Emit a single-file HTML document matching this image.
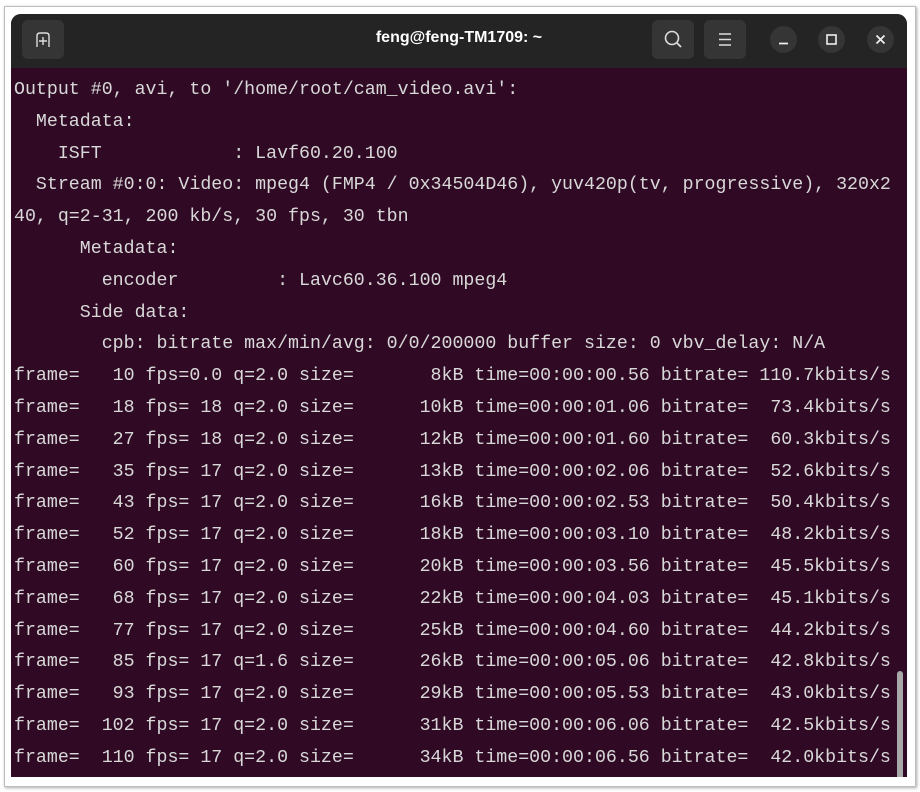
<!DOCTYPE html>
<html><head><style>
body{margin:0;width:920px;height:792px;background:#fff;position:relative;overflow:hidden}
.outer{position:absolute;left:4px;top:6px;width:910px;height:779px;border:1px solid #bdbdbd;box-shadow:1px 1px 3px #aaa;background:#fff}
.win{position:absolute;left:11px;top:14px;width:896px;height:763px;background:#300a24;border-radius:10px 10px 0 0;overflow:hidden}
.hdr{position:absolute;left:0;top:0;width:896px;height:54px;background:#242424}
.btn{position:absolute;top:6px;width:42px;height:39px;background:#353535;border-radius:6px}
.cir{position:absolute;top:12px;width:27px;height:27px;border-radius:50%;background:#353535}
.title{position:absolute;left:0;width:896px;top:15px;text-align:center;color:#fff;font:bold 16px "Liberation Sans",sans-serif}
pre{position:absolute;left:3px;top:61px;margin:0;color:#d8d8d8;font:18.27px/31.8px "Liberation Mono",monospace;white-space:pre}
.sb{position:absolute;left:886px;top:657px;width:6px;height:110px;background:#a8a8a8;border-radius:3px}
</style></head><body>
<div class="outer"></div>
<div class="win">
<div class="hdr">
<div class="btn" style="left:11px"><svg width="42" height="39"><path d="M15 27V16q0-3 3-3h6q3 0 3 3v11" fill="none" stroke="#ddd" stroke-width="1.4"/><path d="M21 17v8M17 21h8" stroke="#ddd" stroke-width="1.4"/></svg></div>
<div class="title">feng@feng-TM1709: ~</div>
<div class="btn" style="left:641px"><svg width="42" height="39"><circle cx="20" cy="18" r="6.5" fill="none" stroke="#ddd" stroke-width="1.6"/><path d="M25 23l4 4" stroke="#ddd" stroke-width="1.8"/></svg></div>
<div class="btn" style="left:693px"><svg width="42" height="39"><path d="M15 14h12M15 19.5h12M15 25h12" stroke="#ddd" stroke-width="1.6"/></svg></div>
<div class="cir" style="left:759px"><svg width="27" height="27"><path d="M9 17.5h9" stroke="#eee" stroke-width="1.8"/></svg></div>
<div class="cir" style="left:807px"><svg width="27" height="27"><rect x="9" y="9" width="9" height="9" fill="none" stroke="#eee" stroke-width="1.6"/></svg></div>
<div class="cir" style="left:856px"><svg width="27" height="27"><path d="M9.5 9.5l8 8M17.5 9.5l-8 8" stroke="#eee" stroke-width="1.8"/></svg></div>
</div>
<pre>Output #0, avi, to '/home/root/cam_video.avi':
  Metadata:
    ISFT            : Lavf60.20.100
  Stream #0:0: Video: mpeg4 (FMP4 / 0x34504D46), yuv420p(tv, progressive), 320x2
40, q=2-31, 200 kb/s, 30 fps, 30 tbn
      Metadata:
        encoder         : Lavc60.36.100 mpeg4
      Side data:
        cpb: bitrate max/min/avg: 0/0/200000 buffer size: 0 vbv_delay: N/A
frame=   10 fps=0.0 q=2.0 size=       8kB time=00:00:00.56 bitrate= 110.7kbits/s
frame=   18 fps= 18 q=2.0 size=      10kB time=00:00:01.06 bitrate=  73.4kbits/s
frame=   27 fps= 18 q=2.0 size=      12kB time=00:00:01.60 bitrate=  60.3kbits/s
frame=   35 fps= 17 q=2.0 size=      13kB time=00:00:02.06 bitrate=  52.6kbits/s
frame=   43 fps= 17 q=2.0 size=      16kB time=00:00:02.53 bitrate=  50.4kbits/s
frame=   52 fps= 17 q=2.0 size=      18kB time=00:00:03.10 bitrate=  48.2kbits/s
frame=   60 fps= 17 q=2.0 size=      20kB time=00:00:03.56 bitrate=  45.5kbits/s
frame=   68 fps= 17 q=2.0 size=      22kB time=00:00:04.03 bitrate=  45.1kbits/s
frame=   77 fps= 17 q=2.0 size=      25kB time=00:00:04.60 bitrate=  44.2kbits/s
frame=   85 fps= 17 q=1.6 size=      26kB time=00:00:05.06 bitrate=  42.8kbits/s
frame=   93 fps= 17 q=2.0 size=      29kB time=00:00:05.53 bitrate=  43.0kbits/s
frame=  102 fps= 17 q=2.0 size=      31kB time=00:00:06.06 bitrate=  42.5kbits/s
frame=  110 fps= 17 q=2.0 size=      34kB time=00:00:06.56 bitrate=  42.0kbits/s</pre>
<div class="sb"></div>
</div>
</body></html>
